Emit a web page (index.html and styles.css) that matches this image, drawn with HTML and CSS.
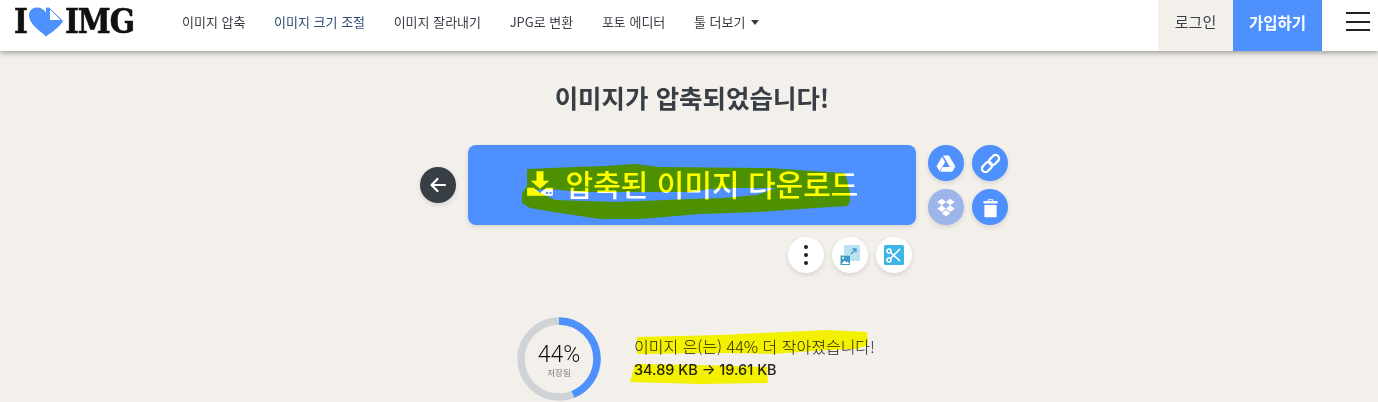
FILE: index.html
```html
<!DOCTYPE html>
<html lang="ko">
<head>
    <meta charset="UTF-8">
    <meta name="viewport" content="width=device-width, initial-scale=1.0">
    <title>이미지가 압축되었습니다</title>
    <link rel="stylesheet" href="styles.css">
</head>
<body>
    <header class="header">
        <a class="logo" href="#">
            <span>I</span>
            <svg class="logo-heart" viewBox="0 0 36 30" width="36" height="30">
                <path d="M18 29.500C12 24 1 17 1 8.500 1 3 5 .5 9 .5c4 0 7 2 9 5V.8c1-.2 2-.3 3-.3L35 14c-3 6-11 11-17 15.500z" fill="#4d90fe"/>
                <path d="M21.500 1.500 33.500 13.500H21.500z" fill="#fff" stroke="#4d90fe" stroke-width="1"/>
            </svg>
            <span>IMG</span>
        </a>
        <nav class="nav">
            <a href="#">이미지 압축</a>
            <a href="#" class="active">이미지 크기 조절</a>
            <a href="#">이미지 잘라내기</a>
            <a href="#">JPG로 변환</a>
            <a href="#">포토 에디터</a>
            <a href="#">툴 더보기 <i class="caret"></i></a>
        </nav>
        <div class="header-right">
            <a href="#" class="login">로그인</a>
            <a href="#" class="signup">가입하기</a>
            <button class="menu-btn"><i></i><i></i><i></i></button>
        </div>
    </header>

    <main class="main">
        <h1 class="title">이미지가 압축되었습니다!</h1>

        <div class="actions">
            <div class="actions-left">
                <button class="round dark">
                    <svg viewBox="0 0 20 20" width="20" height="20"><path d="M17 10H4M9.500 4 3.500 10l6 6" fill="none" stroke="#fff" stroke-width="2.200" stroke-linecap="round" stroke-linejoin="round"/></svg>
                </button>
            </div>
            <a href="#" class="download">
                <svg viewBox="0 0 24 24" width="28" height="28"><path d="M9 2h6v8h5l-8 7-8-7h5z" fill="#fff"/><path d="M1 16h5.500l5.500 4.500 5.500-4.500H23v7H1z" fill="#fff"/><circle cx="18" cy="20.500" r="1" fill="#4d90fe"/><circle cx="21" cy="20.500" r="1" fill="#4d90fe"/></svg>
                압축된 이미지 다운로드
            </a>
            <div class="actions-right">
                <button class="round blue">
                    <svg viewBox="0 0 24 24" width="20" height="20" fill="#fff"><path d="M8.500 3h7l8 13.500h-7z"/><path d="M7.300 4.500 11 10.800 4.300 22 .6 15.800z"/><path d="M8 16.800h15l-3.500 5.700H5z"/></svg>
                </button>
                <button class="round blue">
                    <svg viewBox="0 0 24 24" width="21" height="21" fill="none" stroke="#fff" stroke-width="2.600"><rect x="12" y="1.500" width="8" height="13" rx="4" transform="rotate(45 16 8)"/><rect x="4" y="9.500" width="8" height="13" rx="4" transform="rotate(45 8 16)"/></svg>
                </button>
                <button class="round faded">
                    <svg viewBox="0 0 24 24" width="20" height="20" fill="#fff"><path d="M7 2 1.500 6 7 10 12 6zM17 2l-5 4 5 4 5.500-4zM1.500 14 7 18l5-4-5-4zM17 10l-5 4 5 4 5.500-4zM7 19.500l5-3.800 5 3.800-5 3.500z"/></svg>
                </button>
                <button class="round blue">
                    <svg viewBox="0 0 24 24" width="21" height="21" fill="#fff"><path d="M9 2.500h6v2h5v3H4v-3h5zM10.500 3.500v1h3v-1z" fill-rule="evenodd"/><path d="M5 9h14v13a1 1 0 0 1-1 1H6a1 1 0 0 1-1-1z"/></svg>
                </button>
            </div>
            <div class="tools">
                <button class="round white">
                    <svg viewBox="0 0 36 36" width="36" height="36" fill="#222"><circle cx="18" cy="10" r="2"/><circle cx="18" cy="18" r="2"/><circle cx="18" cy="26" r="2"/></svg>
                </button>
                <button class="round white">
                    <svg viewBox="0 0 36 36" width="36" height="36"><rect x="12" y="8" width="16" height="16" rx="1.500" fill="#b9e1f1"/><path d="M19 17l5-5m-3.500 0H24v3.500" fill="none" stroke="#3d9cc4" stroke-width="1.300"/><rect x="8" y="18" width="10" height="10" fill="#fff"/><rect x="8.500" y="18.500" width="9.500" height="9.500" fill="#3d9cc4"/><path d="M9.500 27l3-3.500 2 2 1-1 2 2.500z" fill="#fff"/><circle cx="11" cy="21" r="1" fill="#fff"/></svg>
                </button>
                <button class="round white">
                    <svg viewBox="0 0 36 36" width="36" height="36"><rect x="8" y="8" width="20" height="20" rx="1.500" fill="#3db5e6"/><g fill="none" stroke="#fff" stroke-width="1.600"><circle cx="13" cy="14" r="2"/><circle cx="13" cy="23" r="2"/><path d="M14.500 15.500 24 24M14.500 21.500 24 12"/></g></svg>
                </button>
            </div>
        </div>

        <section class="stats">
            <div class="ring">
                <svg viewBox="0 0 84 84" width="84" height="84">
                    <circle cx="42" cy="42" r="38" fill="none" stroke="#d0d3d6" stroke-width="7.500"/>
                    <circle cx="42" cy="42" r="38" fill="none" stroke="#4d90fe" stroke-width="7.500" stroke-dasharray="105 239" transform="rotate(-90 42 42)"/>
                </svg>
                <div class="ring-text">
                    <b>44%</b>
                    <small>저장됨</small>
                </div>
            </div>
            <div class="stats-text">
                <p>이미지 은(는) 44% 더 작아졌습니다!</p>
                <p class="sizes">34.89 KB → 19.61 KB</p>
            </div>
        </section>
    </main>

    <!-- highlighter marks drawn on top of the screenshot -->
    <svg class="marks" viewBox="0 0 1378 402" width="1378" height="402">
        <path fill-rule="evenodd" fill="#ffff00" d="M527 169 575 167 605 166 635 164 660 167 770 168 812 171 845 173 847 180 850 193 850 202 847 206 800 209 757 212 700 214 640 219 600 219 560 213 530 208 522 203 522 193 527 186zM535 190 555 200 615 202 690 199 723 198 757 195 776 188 733 188 710 189 690 192 648 192 582 192 548 189z"/>
        <path fill="#ffff00" d="M637 337 720 335 760 333 827 330 867 332 868 345 857 349 827 350 773 354 720 353 637 354z"/>
        <path fill="#ffff00" d="M635 364 700 365 767 367 768 383 700 384 630 382z"/>
    </svg>
</body>
</html>
```

FILE: styles.css
```css
* {
    margin: 0;
    padding: 0;
    box-sizing: border-box;
    font-family: 'Noto Sans CJK KR', 'Liberation Sans', sans-serif;
}

html {
    background-color: #f3f0ec;
}

body {
    position: relative;
    height: 402px;
    overflow: hidden;
    color: #383e45;
}

a {
    text-decoration: none;
    color: inherit;
}

button {
    border: none;
    cursor: pointer;
}

.header {
    display: flex;
    align-items: stretch;
    height: 51px;
    background-color: #fff;
    box-shadow: 0 2px 5px rgba(0, 0, 0, 0.35);
}

.logo {
    display: flex;
    align-items: center;
    width: 182px;
    padding-left: 14px;
    padding-bottom: 8px;
    font-family: 'DejaVu Serif Condensed', 'DejaVu Serif', serif;
    font-weight: bold;
    font-size: 33px;
    letter-spacing: -1px;
    color: #111;
    -webkit-text-stroke: 0.6px #111;
}

.logo span {
    font-family: inherit;
}

.logo-heart {
    margin: 0 1px 0 1px;
}

.nav {
    display: flex;
    align-items: center;
    gap: 28.600px;
    padding-bottom: 8px;
    font-size: 13px;
}

.nav a.active {
    color: #2f4a73;
}

.caret {
    display: inline-block;
    margin-left: 2px;
    vertical-align: 2px;
    border-left: 4.500px solid transparent;
    border-right: 4.500px solid transparent;
    border-top: 5px solid #383e45;
}

.header-right {
    display: flex;
    align-items: stretch;
    margin-left: auto;
}

.login,
.signup {
    display: flex;
    align-items: center;
    justify-content: center;
    padding-bottom: 8px;
}

.login {
    width: 75px;
    background-color: #f3f0ec;
    font-size: 15px;
}

.signup {
    width: 89px;
    background-color: #4d90fe;
    color: #fff;
    font-size: 15.500px;
    font-weight: 700;
}

.menu-btn {
    display: flex;
    flex-direction: column;
    gap: 6.500px;
    width: 56px;
    padding: 12px 8px 0 24px;
    background: none;
}

.menu-btn i {
    display: block;
    height: 2px;
    background-color: #222;
}

.main {
    padding-top: 27px;
    padding-left: 6px;
}

.title {
    font-size: 25.500px;
    font-weight: 700;
    line-height: 38px;
    text-align: center;
}

.actions {
    display: grid;
    grid-template-columns: 1fr 448px 1fr;
    column-gap: 12px;
    row-gap: 12px;
    margin-top: 29px;
}

.actions-left {
    display: flex;
    justify-content: flex-end;
    align-items: center;
}

.actions-right {
    display: grid;
    grid-template-columns: 36px 36px;
    grid-auto-rows: 36px;
    gap: 8px;
}

.download {
    display: flex;
    align-items: center;
    justify-content: center;
    gap: 12px;
    height: 80px;
    padding-bottom: 4px;
    background-color: #4d90fe;
    border-radius: 8px;
    box-shadow: 0 2px 5px rgba(0, 0, 0, 0.12);
    color: #fff;
    font-size: 30px;
    font-weight: 500;
}

.tools {
    grid-column: 2;
    display: flex;
    justify-content: flex-end;
    gap: 8px;
    padding-right: 4px;
}

.round {
    display: flex;
    align-items: center;
    justify-content: center;
    width: 36px;
    height: 36px;
    border-radius: 50%;
    box-shadow: 0 2px 5px rgba(0, 0, 0, 0.12);
}

.round.dark {
    background-color: #383e45;
}

.round.blue {
    background-color: #4d90fe;
}

.round.faded {
    background-color: #9db5e8;
}

.round.white {
    background-color: #fff;
}

.stats {
    display: flex;
    align-items: center;
    gap: 33px;
    width: 448px;
    margin: 44px auto 0;
    padding-left: 49px;
}

.ring {
    position: relative;
    width: 84px;
    height: 84px;
    flex-shrink: 0;
}

.ring svg {
    display: block;
}

.ring-text {
    position: absolute;
    top: 0;
    left: 0;
    width: 100%;
    height: 100%;
    display: flex;
    flex-direction: column;
    align-items: center;
    justify-content: center;
    padding-top: 1px;
}

.ring-text b {
    font-family: 'Roboto', sans-serif;
    font-size: 23px;
    font-weight: 300;
    line-height: 27px;
    color: #111;
}

.ring-text small {
    font-family: 'Liberation Sans', 'Noto Sans CJK KR', sans-serif;
    font-size: 8.500px;
    line-height: 10px;
    color: #777;
}

.stats-text {
    flex-shrink: 0;
    padding-bottom: 2px;
    font-size: 16px;
    font-weight: 300;
    line-height: 24px;
    color: #222;
}

.sizes {
    font-family: 'Inter', sans-serif;
    font-size: 14.500px;
    font-weight: 500;
    color: #222;
}

.marks {
    position: absolute;
    top: 0;
    left: 0;
    pointer-events: none;
    mix-blend-mode: multiply;
}
```
